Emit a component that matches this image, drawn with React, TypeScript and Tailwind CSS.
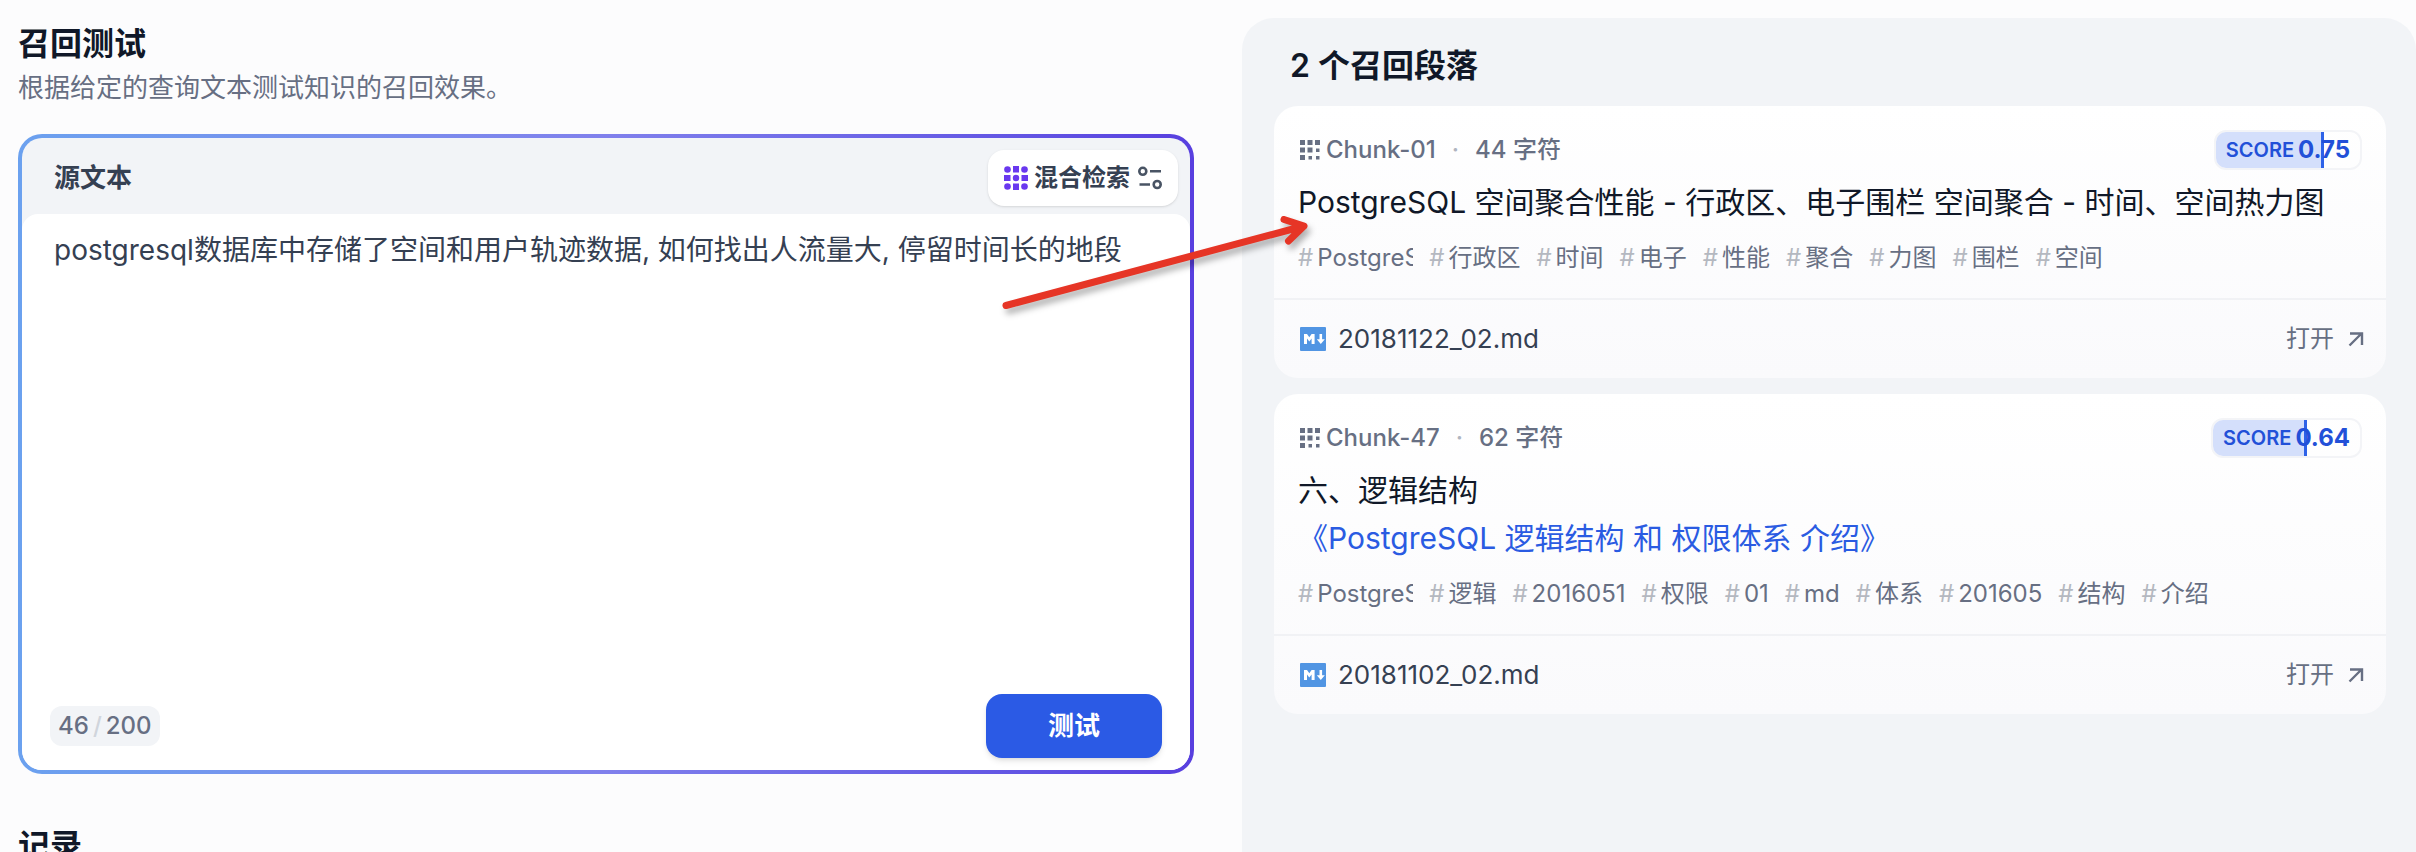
const chunks = [
  {
    id: "Chunk-01",
    count: 44,
    score: 0.75,
    lines: [{ text: "PostgreSQL 空间聚合性能 - 行政区、电子围栏 空间聚合 - 时间、空间热力图", link: false }],
    tags: ["PostgreS", "行政区", "时间", "电子", "性能", "聚合", "力图", "围栏", "空间"],
    file: "20181122_02.md",
  },
  {
    id: "Chunk-47",
    count: 62,
    score: 0.64,
    lines: [
      { text: "六、逻辑结构", link: false },
      { text: "《PostgreSQL 逻辑结构 和 权限体系 介绍》", link: true },
    ],
    tags: ["PostgreS", "逻辑", "2016051", "权限", "01", "md", "体系", "201605", "结构", "介绍"],
    file: "20181102_02.md",
  },
];

function HybridIcon() {
  return (
    <svg className="size-6" viewBox="0 0 24 24" fill="#6938ef" aria-hidden="true">
      <circle cx="3.5" cy="3.5" r="3.3" />
      <rect x="9" y="0" width="6" height="6.5" />
      <circle cx="20.5" cy="3.5" r="3.3" />
      <rect x="0" y="9" width="6.5" height="6" />
      <circle cx="12" cy="12" r="3.2" />
      <rect x="17.5" y="9" width="6.5" height="6" />
      <circle cx="3.5" cy="20.5" r="3.3" />
      <rect x="9" y="17.5" width="6" height="6.5" />
      <circle cx="20.5" cy="20.5" r="3.3" />
    </svg>
  );
}

function EqualizerIcon() {
  return (
    <svg className="size-6" viewBox="0 0 24 24" fill="none" stroke="#495464" strokeWidth="2.6" aria-hidden="true">
      <circle cx="4.8" cy="5.3" r="3.5" />
      <path d="M12 5.3H23M1.5 18.5H12" />
      <circle cx="19.2" cy="18.5" r="3.5" />
    </svg>
  );
}

function ChunkIcon() {
  return (
    <svg className="size-5" viewBox="0 0 20 20" fill="#676f83" aria-hidden="true">
      <path d="M0 0h5v5H0zM7.5 0h5v5h-5zM15 0h5v5h-5zM0 7.5h5v5H0zM7.5 7.5h5v5h-5zM16 8.5h3.5V12H16zM0 15h5v5H0zM8.5 16H12v3.5H8.5zM16 16h3.5v3.5H16z" />
    </svg>
  );
}

function MarkdownIcon() {
  return (
    <svg className="h-6 w-[26px]" viewBox="0 0 26 24" fill="none" aria-hidden="true">
      <rect width="26" height="24" rx="1" fill="#5195e3" />
      <path d="M4 17V7h3l2.3 3.2L11.6 7h3v10h-3v-5.5l-2.3 3-2.3-3V17z" fill="#fff" />
      <path d="M19.5 7h2.6v5.2h2.7L20.8 17l-4-4.800h2.7z" fill="#fff" />
    </svg>
  );
}

function OpenIcon() {
  return (
    <svg className="size-4" viewBox="0 0 16 16" fill="none" stroke="#676f83" strokeWidth="2.4" aria-hidden="true">
      <path d="M1.5 14.5L13.5 2.5M2 2.5H14V14" />
    </svg>
  );
}

function Score({ value }: { value: number }) {
  return (
    <div className="relative flex h-10 items-center gap-1 overflow-hidden rounded-xl border-2 border-[#f3f4f7] px-2.5 text-[#2250d8]">
      <div
        className="absolute inset-y-0 left-0 border-r-[3px] border-[#2d62e8] bg-[#d4dffb]"
        style={{ width: `${value * 100}%` }}
      />
      <span className="relative text-[20px] leading-6 font-semibold">SCORE</span>
      <span className="relative text-[24px] leading-6 font-bold">{value.toFixed(2)}</span>
    </div>
  );
}

function ChunkCard({ chunk }: { chunk: (typeof chunks)[number] }) {
  return (
    <article className="overflow-hidden rounded-3xl bg-linear-to-b from-white to-[#fafafc]">
      <div className="flex flex-col p-6">
        <div className="flex items-center justify-between">
          <div className="flex items-center text-[24px] leading-8 font-medium text-[#676f83]">
            <span className="mr-1.5 ml-0.5">
              <ChunkIcon />
            </span>
            <span>{chunk.id}</span>
            <span className="mx-4 text-[#b0b5c0]">·</span>
            <span>{chunk.count} 字符</span>
          </div>
          <Score value={chunk.score} />
        </div>
        <div className="mt-2 text-[30px] leading-[48px] text-[#101828]">
          {chunk.lines.map((line) => (
            <p key={line.text}>
              {line.link ? (
                <a href="#post" className="text-[#2a5be2]">
                  {line.text}
                </a>
              ) : (
                line.text
              )}
            </p>
          ))}
        </div>
        <ul className="mt-4 flex gap-4 text-[24px] leading-8 text-[#676f83]">
          {chunk.tags.map((tag) => (
            <li key={tag} className="flex gap-1">
              <span className="text-[#b4b8c0]">#</span>
              <span className="max-w-24 overflow-hidden whitespace-nowrap">{tag}</span>
            </li>
          ))}
        </ul>
      </div>
      <footer className="flex h-20 items-center justify-between border-t-2 border-[#f1f2f5] pr-[22px] pl-6">
        <div className="flex items-center gap-3 text-[26px] leading-10 text-[#354052]">
          <span className="ml-0.5">
            <MarkdownIcon />
          </span>
          {chunk.file}
        </div>
        <button type="button" className="flex items-center gap-3.5 text-[24px] leading-8 text-[#676f83]">
          打开
          <OpenIcon />
        </button>
      </footer>
    </article>
  );
}

function Arrow() {
  return (
    <svg
      className="pointer-events-none absolute top-[206px] left-[990px] h-[120px] w-[340px] drop-shadow-[3px_5px_3px_rgba(0,0,0,0.3)]"
      viewBox="990 206 340 120"
      fill="none"
      stroke="#e63526"
      strokeWidth="7"
      strokeLinecap="round"
      strokeLinejoin="round"
      aria-hidden="true"
    >
      <path d="M1006 305.5L1304 226M1284 219.5L1304 226L1288.5 241" />
    </svg>
  );
}

export default function App() {
  return (
    <main className="relative grid h-screen grid-cols-[1242fr_1174fr] overflow-hidden bg-[#fcfcfd] font-['Inter','Noto_Sans_CJK_SC',sans-serif]">
      <section className="flex min-w-0 flex-col pt-6 pr-12 pl-[18px]">
        <h1 className="text-[32px] leading-10 font-semibold text-[#101828]">召回测试</h1>
        <p className="mt-1 text-[26px] leading-10 text-[#676f83]">根据给定的查询文本测试知识的召回效果。</p>
        <form
          className="mt-[26px] rounded-3xl bg-linear-to-r from-[#6ba1ef] via-[#8080ec] to-[#583fdf] p-1"
          onSubmit={(event) => event.preventDefault()}
        >
          <div className="overflow-hidden rounded-[20px] bg-[#f2f4f7]">
            <div className="flex h-[76px] items-center justify-between pt-1 pr-3 pl-8">
              <label htmlFor="source" className="text-[26px] leading-10 font-semibold text-[#354052]">
                源文本
              </label>
              <button
                type="button"
                className="flex h-14 items-center gap-1.5 rounded-2xl bg-white px-4 text-[24px] leading-8 font-semibold text-[#354052] shadow-sm"
              >
                <HybridIcon />
                混合检索
                <span className="pl-0.5">
                  <EqualizerIcon />
                </span>
              </button>
            </div>
            <div className="rounded-t-2xl bg-white pb-3">
              <textarea
                id="source"
                className="block h-[480px] w-full resize-none px-8 pt-4 text-[28px] leading-10 text-[#354052] outline-none"
                defaultValue="postgresql数据库中存储了空间和用户轨迹数据, 如何找出人流量大, 停留时间长的地段"
              />
              <div className="flex items-center justify-between px-7">
                <div className="flex h-10 items-center gap-1 rounded-xl bg-[#f2f4f7] px-2 text-[24px] leading-8 font-medium text-[#676f83]">
                  <span>46</span>
                  <span className="text-[#d0d5dc]">/</span>
                  <span>200</span>
                </div>
                <button
                  type="submit"
                  className="h-16 w-44 rounded-2xl bg-[#2b5ae5] text-[26px] leading-10 font-semibold text-white shadow-md"
                >
                  测试
                </button>
              </div>
            </div>
          </div>
        </form>
        <h2 className="mt-[52px] text-[32px] leading-10 font-semibold text-[#101828]">记录</h2>
      </section>
      <section className="mt-[18px] flex min-w-0 flex-col rounded-t-[32px] bg-[#f2f4f7] pr-[30px] pl-8">
        <h2 className="mt-7 mb-5 ml-4 text-[32px] leading-10 font-semibold text-[#101828]">2 个召回段落</h2>
        <div className="flex flex-col gap-4">
          {chunks.map((chunk) => (
            <ChunkCard key={chunk.id} chunk={chunk} />
          ))}
        </div>
      </section>
      <Arrow />
    </main>
  );
}
